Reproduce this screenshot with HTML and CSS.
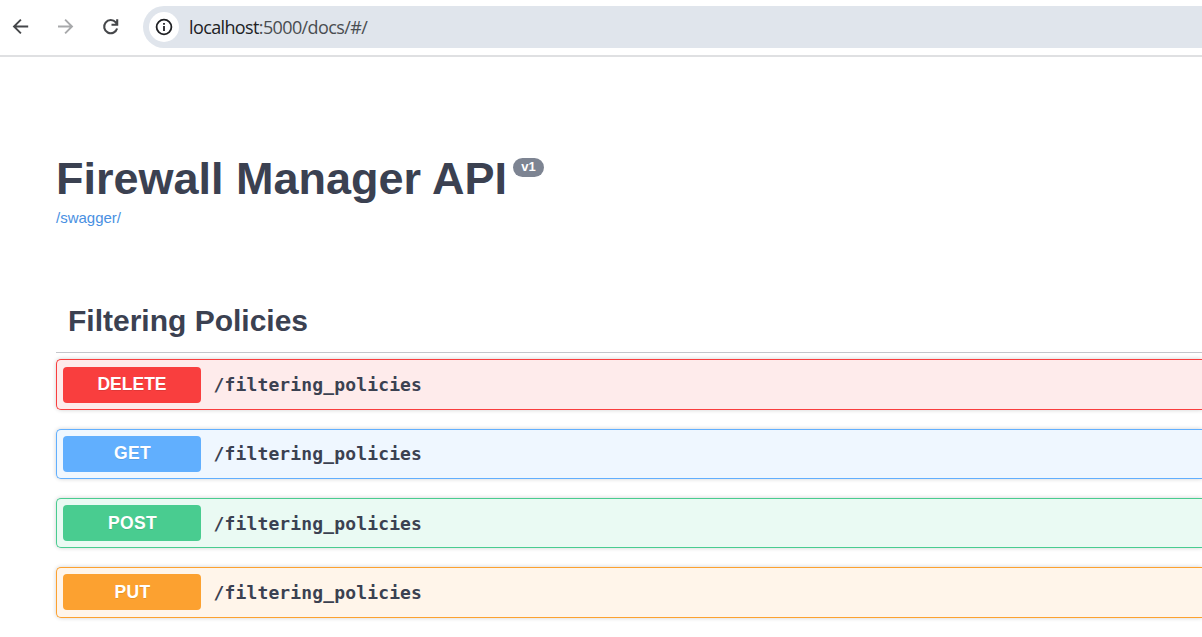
FILE: index.html
```html
<!DOCTYPE html>
<html lang="en">
<head>
<meta charset="utf-8">
<title>Firewall Manager API</title>
<link rel="stylesheet" href="styles.css">
</head>
<body>
<header class="toolbar">
  <svg class="nav" viewBox="0 0 20 20"><path d="M17.2 9.5H3.8M9.9 2.6 3 9.5l6.9 6.9"/></svg>
  <svg class="nav nav-off" viewBox="0 0 20 20"><path d="M2 9.5h14M9.1 2.6l6.9 6.9-6.9 6.9"/></svg>
  <svg class="nav reload" viewBox="0 0 20 20"><path d="M16.1 11.5A6.6 6.6 0 1 1 14.8 5.4L16 7M16.2 2.2v5.6h-5.7"/></svg>
  <div class="address">
    <span class="info"><svg viewBox="0 0 18 18"><circle cx="9" cy="9" r="7.4"/><path d="M9 8v5M9 5v1.8"/></svg></span>
    <span class="url"><span class="host">localhost</span>:5000/docs/#/</span>
  </div>
</header>
<main class="page">
  <div class="heading"><h1>Firewall Manager API</h1><span class="version">v1</span></div>
  <a class="link">/swagger/</a>
  <h2>Filtering Policies</h2>
  <section class="ops">
    <div class="op delete"><span class="method">DELETE</span><span class="path">/filtering_policies</span></div>
    <div class="op get"><span class="method">GET</span><span class="path">/filtering_policies</span></div>
    <div class="op post"><span class="method">POST</span><span class="path">/filtering_policies</span></div>
    <div class="op put"><span class="method">PUT</span><span class="path">/filtering_policies</span></div>
  </section>
</main>
</body>
</html>
```
FILE: styles.css
```css
* { box-sizing: border-box; }
body { margin: 0; height: 637px; overflow: hidden; background: #fff; color: #3b4151; font-family: "Liberation Sans", Arial, sans-serif; }
.toolbar { height: 57px; display: flex; align-items: flex-start; padding: 6px 0 0 11px; border-bottom: 2px solid #dfe0e2; }
.nav { width: 20px; height: 20px; margin: 11px 25px 0 0; fill: none; stroke: #45474a; stroke-width: 1.9; flex: none; }
.nav-off { stroke: #a8a9ab; }
.reload { stroke-width: 2.1; }
.address { flex: 1; height: 42px; margin-left: -3px; background: #e0e5ec; border-radius: 21px 0 0 21px; display: flex; align-items: center; padding-left: 6px; }
.info { width: 30px; height: 30px; border-radius: 50%; background: #fff; display: flex; align-items: center; justify-content: center; }
.info svg { width: 18px; height: 18px; fill: none; stroke: #202124; stroke-width: 1.8; }
.url { margin-left: 10px; font: 18px/24px "Open Sans", sans-serif; letter-spacing: -.62px; color: #4a4d51; }
.host { color: #202124; }
.page { padding: 92px 0 0 56px; }
.heading { display: flex; align-items: flex-start; height: 60px; }
h1 { margin: 0; font-size: 45px; line-height: 60px; white-space: nowrap; }
.version { margin: 9px 0 0 6px; width: 31px; height: 19px; border-radius: 10px; background: #7d8492; color: #fff; font-weight: bold; font-size: 13px; line-height: 18px; text-align: center; }
.link { display: block; font-size: 15px; line-height: 18px; color: #4990e2; }
h2 { margin: 65px 0 0; height: 61px; padding-left: 12px; font-size: 30px; line-height: 58px; border-bottom: 1px solid #c4c6cb; }
.ops { padding-top: 6px; display: flex; flex-direction: column; gap: 19px; }
.op { height: 50px; display: flex; align-items: flex-start; padding: 6px 0 0 6px; border: 1px solid; border-right: 0; border-radius: 5px 0 0 5px; box-shadow: 0 0 4px rgba(0,0,0,.19); }
.method { width: 138px; height: 36px; padding-left: 1px; border-radius: 4px; color: #fff; text-align: center; font-weight: bold; font-size: 17.5px; line-height: 34px; letter-spacing: .4px; text-shadow: 0 1px 0 rgba(0,0,0,.1); }
.path { margin: 6px 0 0 12.5px; font: bold 18px/24px "DejaVu Sans Mono", monospace; letter-spacing: .14px; }
.delete { height: 51px; padding-top: 7px; border-color: #f93e3e; background: #feebeb; }
.delete .method { padding-left: 0; background: #f93e3e; letter-spacing: 0; }
.get { border-color: #61affe; background: #eff7ff; }
.get .method { background: #61affe; }
.post { border-color: #49cc90; background: #eafaf3; }
.post .method { background: #49cc90; line-height: 36px; }
.put { height: 51px; border-color: #fca130; background: #fff5ea; }
.put .method { background: #fca130; line-height: 36px; }
.post .path, .put .path { margin-top: 7px; }
```
